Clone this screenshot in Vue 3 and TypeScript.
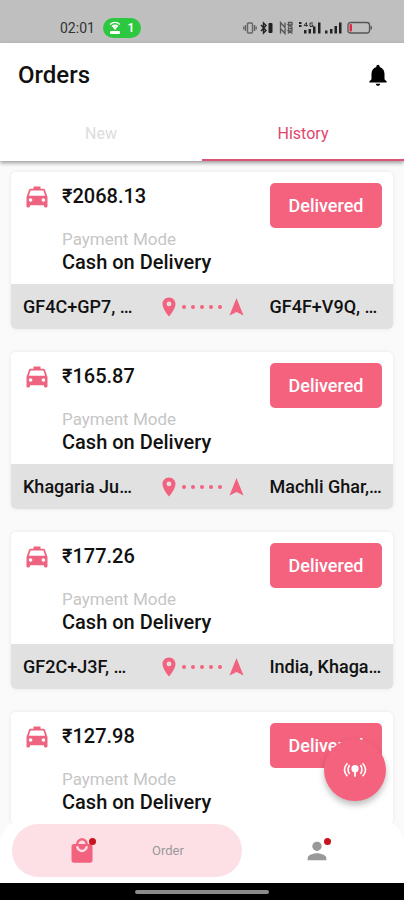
<script setup lang="ts">
import { ref } from 'vue'

interface Order {
  amount: string
  payment: string
  status: string
  from?: string
  to?: string
}

const tabs = ['New', 'History']
const activeTab = ref('History')

const orders: Order[] = [
  { amount: '₹2068.13', payment: 'Cash on Delivery', status: 'Delivered', from: 'GF4C+GP7, …', to: 'GF4F+V9Q, …' },
  { amount: '₹165.87', payment: 'Cash on Delivery', status: 'Delivered', from: 'Khagaria Ju…', to: 'Machli Ghar,…' },
  { amount: '₹177.26', payment: 'Cash on Delivery', status: 'Delivered', from: 'GF2C+J3F, …', to: 'India, Khaga…' },
  { amount: '₹127.98', payment: 'Cash on Delivery', status: 'Delivered' },
]
</script>

<template>
  <div class="app">
    <div class="status">
      <div class="status-group">
        <span class="clock">02:01</span>
        <span class="hotspot">
          <svg width="12" height="14" viewBox="0 0 12 14" fill="none" stroke="#fff">
            <path d="M1 3.5C4 .8 8 .8 11 3.5M3 5.5c2-1.6 4-1.6 6 0" stroke-width="1.500" />
            <path d="M4 5.800h4L6 8.500z" fill="#fff" />
            <rect x="1" y="10" width="10" height="3" rx="1" fill="#fff" stroke="none" />
          </svg>
          1
        </span>
      </div>
      <svg class="signals" width="132" height="16" viewBox="0 0 132 16" fill="#222">
        <g fill="none" stroke="#666" stroke-width="1.400">
          <rect x="4.500" y="3" width="5" height="10" rx="1" />
          <path d="M2.500 5v6M11.500 5v6M.8 6.500v3M13.200 6.500v3" />
        </g>
        <path d="M18 5l5 5.500-2.500 2.500V3L23 5.500 18 11" fill="none" stroke="#222" stroke-width="1.400" />
        <rect x="25.500" y="3" width="4" height="10" rx="1" />
        <g fill="none" stroke="#555" stroke-width="1.300">
          <path d="M37.500 7.500V2.500l4.500 5v-5M45.500 7.500v-5H49v2.500h-3.500l4 2.500M37.500 13.500v-5l4.500 5v-5M45.500 13.500v-5H49V11h-3.500l4 2.500" />
        </g>
        <path d="M56 2h2.500v2H56zM56 5h2.500v2H56z" />
        <path d="M63.500 2.500L61 5.500h4M63.500 2.500v4M70 3h-3v3.500h3V5h-1.500" fill="none" stroke="#333" stroke-width="1" />
        <path d="M61 10h2.500v3.500H61zM65.500 9h2.500v4.500h-2.500zM70 6.500h2.500v7H70zM75 2.500h2.500v11H75zM82 10.500h2.500v3H82zM87 9h2.500v4.500H87zM91.500 6h2.500v7.500h-2.500zM96 2.500h2.500v11H96z" />
        <rect x="105" y="2.500" width="21.500" height="10.500" rx="2.500" fill="none" stroke="#555" stroke-width="1.300" />
        <path d="M127.500 5.500c2 .5 2 4 0 4.500z" fill="#555" />
        <rect x="106.500" y="4" width="2.500" height="7.500" rx="1" fill="#e52647" />
      </svg>
    </div>

    <header class="header">
      <div class="title-row">
        <h1>Orders</h1>
        <button class="bell" type="button" aria-label="Notifications">
          <svg width="26" height="26" viewBox="0 0 24 24">
            <path d="M12 22c1.100 0 2-.9 2-2h-4c0 1.100.9 2 2 2zm6-6v-5c0-3.070-1.630-5.640-4.500-6.320V4c0-.83-.67-1.500-1.500-1.500s-1.500.67-1.500 1.500v.68C7.640 5.360 6 7.920 6 11v5l-2 2v1h16v-1l-2-2z" />
          </svg>
        </button>
      </div>
      <nav class="tabs">
        <button
          v-for="tab in tabs"
          :key="tab"
          type="button"
          class="tab"
          :class="{ active: tab === activeTab }"
          @click="activeTab = tab"
        >{{ tab }}</button>
      </nav>
    </header>

    <main class="list">
      <article v-for="order in orders" :key="order.amount" class="card">
        <div class="card-body">
          <svg class="taxi" width="28" height="28" viewBox="0 0 24 24">
            <path d="M18.920 6.010C18.720 5.420 18.160 5 17.500 5H15V3H9v2H6.500c-.66 0-1.210.42-1.420 1.010L3 12v8c0 .55.45 1 1 1h1c.55 0 1-.45 1-1v-1h12v1c0 .55.45 1 1 1h1c.55 0 1-.45 1-1v-8l-2.080-5.990zM6.500 16c-.83 0-1.500-.67-1.500-1.500S5.670 13 6.500 13s1.500.67 1.500 1.500S7.330 16 6.500 16zm11 0c-.83 0-1.500-.67-1.500-1.500s.67-1.500 1.500-1.500 1.500.67 1.500 1.500-.67 1.500-1.500 1.500zM5 11l1.500-4.500h11L19 11H5z" />
          </svg>
          <div class="details">
            <strong class="amount">{{ order.amount }}</strong>
            <span class="label">Payment Mode</span>
            <span class="payment">{{ order.payment }}</span>
          </div>
          <button class="badge" type="button">{{ order.status }}</button>
        </div>
        <div v-if="order.from" class="route">
          <span class="place">{{ order.from }}</span>
          <svg class="path" width="84" height="22" viewBox="0 0 84 22">
            <path fill-rule="evenodd" d="M8 1.500c-3.600 0-6.500 2.900-6.500 6.400C1.500 12.800 8 20.500 8 20.500s6.500-7.700 6.500-12.600c0-3.500-2.900-6.400-6.500-6.400zm0 8.800a2.400 2.400 0 1 1 0-4.800 2.400 2.400 0 0 1 0 4.800z" />
            <circle v-for="n in 5" :key="n" :cx="14 + n * 9" cy="11" r="2" />
            <path d="M75.500 2l7 17.500-7-3.500-7 3.500z" />
          </svg>
          <span class="place">{{ order.to }}</span>
        </div>
      </article>
    </main>

    <footer class="dock">
      <button class="fab" type="button" aria-label="Live location">
        <svg width="24" height="18" viewBox="0 0 26 20" fill="none" stroke="#fff" stroke-width="1.800">
          <circle cx="13" cy="8.500" r="4" fill="#fff" stroke="none" />
          <path d="M13 10v7.500" stroke-width="2" />
          <path d="M7 4.500c-2 3-2 7 0 10M4.500 2.500c-4 4.500-4 10 0 14.500M19 4.500c2 3 2 7 0 10M21.500 2.500c4 4.500 4 10 0 14.500" />
        </svg>
      </button>
      <nav class="bottom-nav">
        <a href="#order" class="nav-item current">
          <span class="nav-icon">
            <svg width="28" height="28" viewBox="0 0 24 24">
              <path d="M19 6h-2c0-2.760-2.240-5-5-5S7 3.240 7 6H5c-1.100 0-2 .9-2 2v12c0 1.100.9 2 2 2h14c1.100 0 2-.9 2-2V8c0-1.100-.9-2-2-2zm-7-3c1.660 0 3 1.340 3 3H9c0-1.660 1.340-3 3-3zm0 10c-2.760 0-5-2.240-5-5h2c0 1.660 1.340 3 3 3s3-1.340 3-3h2c0 2.760-2.240 5-5 5z" />
            </svg>
            <i class="dot"></i>
          </span>
          <span>Order</span>
        </a>
        <a href="#profile" class="nav-item profile" aria-label="Profile">
          <span class="nav-icon">
            <svg width="28" height="28" viewBox="0 0 24 24">
              <path d="M12 12c2.210 0 4-1.790 4-4s-1.790-4-4-4-4 1.790-4 4 1.790 4 4 4zm0 2c-2.670 0-8 1.340-8 4v2h16v-2c0-2.660-5.330-4-8-4z" />
            </svg>
            <i class="dot"></i>
          </span>
        </a>
      </nav>
      <div class="gesture"><span></span></div>
    </footer>
  </div>
</template>

<style>
body {
  margin: 0;
  background: #fafafa;
}
</style>

<style scoped>
.app {
  display: flex;
  flex-direction: column;
  height: 100vh;
  overflow: hidden;
  background: #fafafa;
  color: #111;
  font-family: Roboto, "Noto Sans", sans-serif;
}
button {
  border: 0;
  padding: 0;
  background: none;
  font: inherit;
  color: inherit;
  cursor: pointer;
}
svg {
  display: block;
}
.status {
  display: flex;
  flex: none;
  justify-content: space-between;
  align-items: center;
  box-sizing: border-box;
  height: 43px;
  padding: 12px 29px 0 60px;
  background: #bfbfbf;
}
.status-group {
  display: flex;
  align-items: center;
  gap: 8px;
}
.clock {
  font-size: 14px;
  line-height: 20px;
  color: #333;
}
.hotspot {
  display: flex;
  align-items: center;
  justify-content: center;
  gap: 6px;
  width: 38px;
  height: 20px;
  border-radius: 10px;
  background: #2bc840;
  color: #fff;
  font-size: 13px;
  font-weight: 500;
}
.header {
  position: relative;
  z-index: 1;
  flex: none;
  background: #fff;
  box-shadow: 0 2px 4px rgba(0, 0, 0, 0.38);
}
.title-row {
  display: flex;
  align-items: center;
  justify-content: space-between;
  height: 64px;
  padding: 0 13px 0 18px;
}
h1 {
  margin: 0;
  font-size: 24px;
  line-height: 32px;
  font-weight: 500;
}
.tabs {
  display: grid;
  grid-template-columns: 1fr 1fr;
}
.tab {
  height: 54px;
  box-sizing: border-box;
  border-bottom: 2px solid transparent;
  font-size: 16px;
  font-weight: 400;
  color: #dcdcdc;
}
.tab.active {
  border-color: #dc5573;
  color: #e0456c;
}
.list {
  flex: 1;
  min-height: 0;
  display: flex;
  flex-direction: column;
  gap: 23px;
  padding: 11px 11px 0;
  overflow-y: auto;
  scrollbar-width: none;
}
.card {
  flex: none;
  overflow: hidden;
  border-radius: 5px;
  background: #fff;
  box-shadow: 0 0 4px rgba(0, 0, 0, 0.08);
}
.card-body {
  display: flex;
  align-items: flex-start;
  height: 101px;
  padding: 11px 11px 0 12px;
}
.taxi {
  fill: #ee6480;
}
.details {
  display: flex;
  flex: 1;
  flex-direction: column;
  margin-left: 11px;
}
.amount {
  font-size: 20px;
  line-height: 26px;
  font-weight: 500;
}
.label {
  margin-top: 20px;
  font-size: 17px;
  line-height: 20px;
  color: #c6c6c6;
}
.payment {
  font-size: 20px;
  line-height: 26px;
  font-weight: 500;
}
.badge {
  width: 112px;
  height: 45px;
  border-radius: 5px;
  background: #f4627d;
  color: #fff;
  font-size: 18px;
  font-weight: 500;
}
.route {
  display: grid;
  grid-template-columns: 1fr 84px 1fr;
  column-gap: 25px;
  align-items: center;
  height: 45px;
  padding: 0 11px 0 12px;
  background: #e1e1e1;
}
.place {
  white-space: nowrap;
  font-size: 18px;
  line-height: 24px;
  font-weight: 500;
}
.path {
  fill: #f2627f;
}
.dock {
  position: fixed;
  right: 0;
  bottom: 0;
  left: 0;
  z-index: 2;
}
.fab {
  position: absolute;
  right: 18px;
  bottom: 99px;
  display: grid;
  place-items: center;
  width: 62px;
  height: 62px;
  border-radius: 50%;
  background: #f4627d;
  box-shadow: 0 4px 6px rgba(0, 0, 0, 0.25);
}
.bottom-nav {
  display: grid;
  grid-template-columns: 230fr 150fr;
  padding: 4px 12px 6px;
  border-radius: 24px 24px 0 0;
  background: #fff;
}
.nav-item {
  display: flex;
  align-items: center;
  height: 53px;
  border-radius: 27px;
  color: #999;
  font-size: 13px;
  text-decoration: none;
}
.current {
  gap: 56px;
  padding-left: 56px;
  background: #fde0e6;
}
.current svg {
  fill: #f2627f;
}
.profile {
  justify-content: center;
}
.profile svg {
  fill: #999;
}
.nav-icon {
  position: relative;
}
.dot {
  position: absolute;
  top: 1px;
  right: 0;
  width: 7px;
  height: 7px;
  border-radius: 50%;
  background: #c8141e;
}
.gesture {
  display: flex;
  align-items: center;
  justify-content: center;
  height: 17px;
  background: #000;
}
.gesture span {
  width: 33%;
  height: 4px;
  border-radius: 2px;
  background: #8b8b8b;
}
</style>
